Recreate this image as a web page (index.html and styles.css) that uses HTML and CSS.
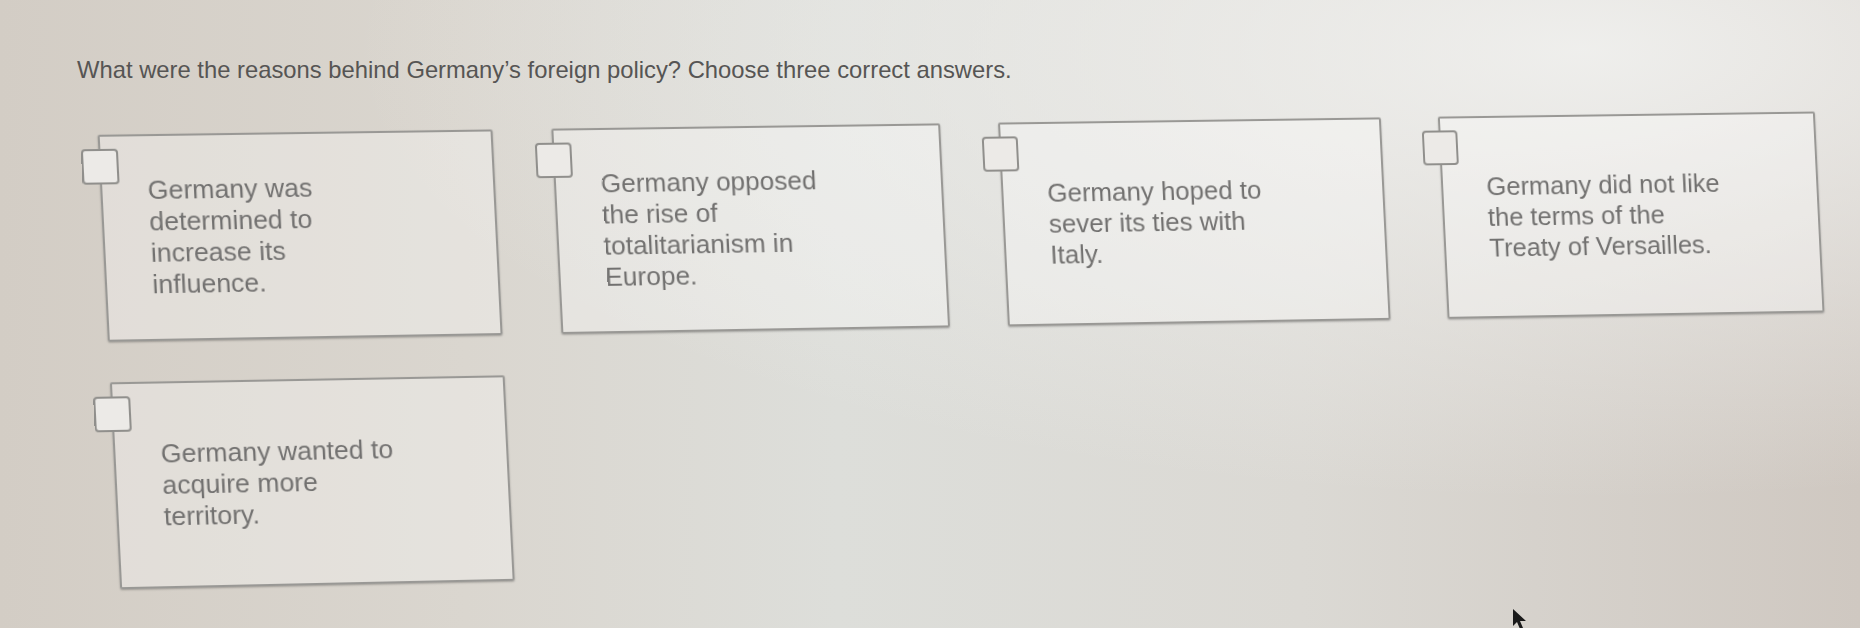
FILE: index.html
```html
<!DOCTYPE html>
<html lang="en">
<head>
  <meta charset="UTF-8">
  <title>Germany's foreign policy</title>
  <link rel="stylesheet" href="styles.css">
</head>
<body>
  <main class="page">
    <p class="question">What were the reasons behind Germany’s foreign policy? Choose three correct answers.</p>

    <div class="answers">
      <label class="answer">
        <input type="checkbox" class="answer-check">
        <span class="answer-text">Germany was determined to increase its influence.</span>
      </label>
      <label class="answer">
        <input type="checkbox" class="answer-check">
        <span class="answer-text">Germany opposed the rise of totalitarianism in Europe.</span>
      </label>
      <label class="answer">
        <input type="checkbox" class="answer-check">
        <span class="answer-text">Germany hoped to sever its ties with Italy.</span>
      </label>
      <label class="answer">
        <input type="checkbox" class="answer-check">
        <span class="answer-text">Germany did not like the terms of the Treaty of Versailles.</span>
      </label>
      <label class="answer">
        <input type="checkbox" class="answer-check">
        <span class="answer-text">Germany wanted to acquire more territory.</span>
      </label>
    </div>
  </main>

  <svg class="pointer" width="18" height="22" viewBox="0 0 18 22">
    <path d="M1 1 L1 18 L5 14 L8 21 L11 20 L8 13 L14 13 Z" fill="#1a1a1a"/>
  </svg>
</body>
</html>
```

FILE: styles.css
```css
html, body {
  height: 100%;
}
body {
  margin: 0;
  font-family: "Liberation Sans", Arial, sans-serif;
  background:
    radial-gradient(ellipse at 85% 8%, rgba(240,240,238,0.95), rgba(240,240,238,0) 55%),
    linear-gradient(90deg, #d3cdc5 0%, #dad6cf 25%, #dddeda 45%, #dbd9d4 70%, #cfc8c1 100%);
  overflow: hidden;
  position: relative;
}
.page {
  padding: 56px 40px 0 77px;
}
.question {
  margin: 0;
  font-size: 23.8px;
  line-height: 27px;
  color: #565554;
}
.answers {
  margin: 40px 0 0 44px;
  display: grid;
  grid-template-columns: repeat(4, 386px);
  grid-auto-rows: 204px;
  column-gap: 58px;
  row-gap: 40px;
  transform: perspective(2000px) rotateY(2deg) rotate(-1deg) skewX(1.8deg);
}
.answer {
  position: relative;
  display: flex;
  align-items: center;
  padding-left: 44px;
  background: rgba(255,255,255,0.3);
  border: 2px solid #999895;
  border-radius: 2px;
  box-shadow: 0 1px 2px rgba(0,0,0,0.25);
  cursor: pointer;
}
.answer-check {
  appearance: none;
  -webkit-appearance: none;
  position: absolute;
  left: -19px;
  top: 12px;
  width: 36px;
  height: 35px;
  margin: 0;
  background: #eceae7;
  border: 2px solid #908f8c;
  border-radius: 4px;
  cursor: pointer;
}
.answer-text {
  width: 244px;
  font-size: 26px;
  line-height: 31px;
  color: #727170;
}
.pointer {
  position: absolute;
  left: 1512px;
  top: 608px;
}
```
